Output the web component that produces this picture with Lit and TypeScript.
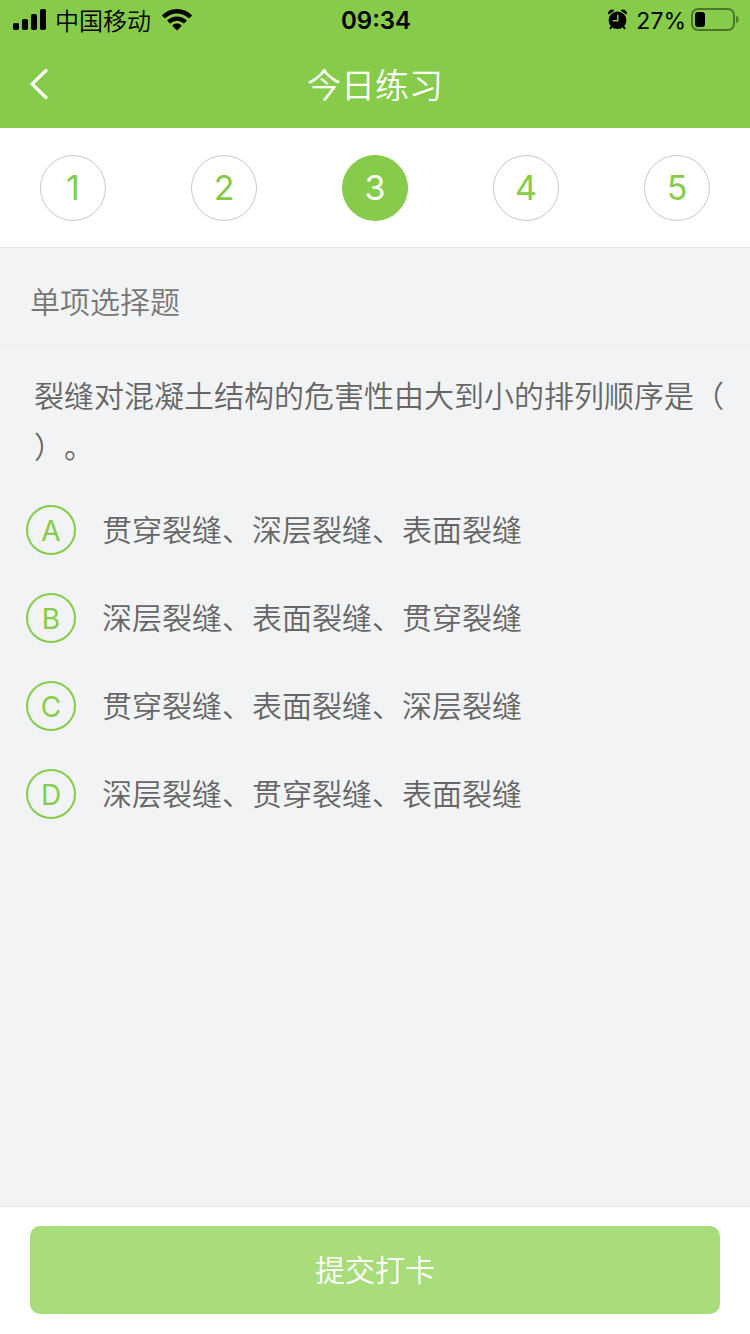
import { LitElement, html, css } from "lit";
import { customElement, state } from "lit/decorators.js";
import { classMap } from "lit/directives/class-map.js";

@customElement("status-bar")
class StatusBar extends LitElement {
  static styles = css`
    :host {
      display: grid;
      grid-template-columns: 1fr auto 1fr;
      align-items: center;
      height: 40px;
      padding: 0 11px 0 13px;
      color: #000;
      font-size: 24px;
      font-weight: 400;
      line-height: 36px;
    }
    .side {
      display: flex;
      align-items: center;
    }
    .left {
      gap: 9px;
    }
    .wifi {
      margin-left: 2px;
    }
    .right {
      justify-content: flex-end;
      gap: 5px;
    }
    .alarm {
      margin-right: 4px;
    }
    .time,
    .percent {
      padding-top: 2px;
    }
    .carrier {
      padding-top: 4px;
      font-weight: 350;
    }
    .time {
      font-weight: 600;
    }
    .percent {
      font-size: 23px;
    }
    svg {
      display: block;
      flex: none;
    }
  `;

  render() {
    return html`
      <div class="side left">
        <svg width="33" height="22" viewBox="0 0 33 22" aria-hidden="true">
          <rect x="0" y="14" width="6" height="7" rx="1.8" />
          <rect x="9" y="10" width="6" height="11" rx="1.8" />
          <rect x="18" y="5" width="6" height="16" rx="1.8" />
          <rect x="27" y="0" width="6" height="21" rx="1.8" />
        </svg>
        <span class="carrier">中国移动</span>
        <svg class="wifi" width="30" height="22" viewBox="0 0 30 22" aria-hidden="true">
          <path d="M15 0C20.700 0 25.900 2.200 29.700 5.900C30 6.200 30 6.600 29.700 6.900L27.500 9.100C27.200 9.400 26.800 9.400 26.500 9.100C23.400 6.200 19.400 4.500 15 4.500S6.600 6.200 3.500 9.100C3.200 9.400 2.800 9.400 2.500 9.100L.3 6.900C0 6.600 0 6.200 .3 5.900C4.100 2.200 9.300 0 15 0Z" />
          <path d="M15 7.400C18.700 7.400 22 8.800 24.500 11.100C24.800 11.400 24.800 11.800 24.500 12.100L22.300 14.300C22 14.600 21.600 14.600 21.300 14.300C19.600 12.800 17.400 11.800 15 11.800S10.400 12.800 8.700 14.300C8.400 14.600 8 14.600 7.700 14.300L5.500 12.100C5.200 11.800 5.200 11.400 5.500 11.100C8 8.800 11.300 7.400 15 7.400Z" />
          <path d="M15 14.600C16.700 14.600 18.200 15.200 19.400 16.200C19.700 16.500 19.700 16.900 19.400 17.200L15.500 21.100C15.200 21.400 14.800 21.400 14.500 21.100L10.600 17.200C10.300 16.900 10.300 16.500 10.600 16.200C11.800 15.200 13.300 14.600 15 14.600Z" />
        </svg>
      </div>
      <span class="time">09:34</span>
      <div class="side right">
        <svg class="alarm" width="19" height="22" viewBox="0 0 20 22" aria-hidden="true">
          <path d="M.5 5.400A4 4 0 0 1 6.800 .9ZM19.500 5.400A4 4 0 0 0 13.200 .9Z" />
          <path d="M4.200 17.500L2.500 19.800M15.800 17.500L17.500 19.800" stroke="#000" stroke-width="2" stroke-linecap="round" />
          <circle cx="10" cy="11.300" r="9.300" />
          <path d="M10.300 6V11.800H5.500" fill="none" stroke="#86cc4a" stroke-width="1.500" stroke-linecap="round" stroke-linejoin="round" />
        </svg>
        <span class="percent">27%</span>
        <svg width="48" height="24" viewBox="0 0 48 24" aria-hidden="true">
          <rect x="1" y="1" width="42" height="21" rx="6" fill="none" stroke="#000" stroke-opacity=".42" stroke-width="2" />
          <rect x="4" y="4" width="10" height="15" rx="3" />
          <path d="M45.200 7.700C46.800 8.300 47.600 9.700 47.600 11.500S46.800 14.700 45.200 15.300Z" fill-opacity=".42" />
        </svg>
      </div>
    `;
  }
}

@customElement("app-root")
class AppRoot extends LitElement {
  @state() private current = 3;
  @state() private answer = "";

  private readonly steps = [1, 2, 3, 4, 5];
  private readonly options = [
    { key: "A", text: "贯穿裂缝、深层裂缝、表面裂缝" },
    { key: "B", text: "深层裂缝、表面裂缝、贯穿裂缝" },
    { key: "C", text: "贯穿裂缝、表面裂缝、深层裂缝" },
    { key: "D", text: "深层裂缝、贯穿裂缝、表面裂缝" },
  ];

  static styles = css`
    :host {
      display: flex;
      flex-direction: column;
      min-height: 100vh;
      background: #f2f3f5;
      color: #666;
      font-family: Inter, "Noto Sans CJK SC", sans-serif;
      font-size: 30px;
      font-weight: 350;
      text-spacing-trim: space-all;
    }
    * {
      box-sizing: border-box;
    }
    button {
      margin: 0;
      padding: 0;
      border: 0;
      background: none;
      font: inherit;
      cursor: pointer;
    }
    .top {
      background: #86cc4a;
    }
    .bar {
      display: grid;
      grid-template-columns: 80px 1fr 80px;
      align-items: center;
      height: 88px;
      color: #fff;
    }
    .back {
      display: flex;
      align-items: center;
      height: 88px;
      padding-left: 30px;
      color: #fff;
    }
    .title {
      margin: 0;
      padding-top: 4px;
      font-size: 34px;
      font-weight: 350;
      line-height: 84px;
      text-align: center;
    }
    .steps {
      display: flex;
      justify-content: space-between;
      padding: 27px 40px 26px;
      border-bottom: 1px solid #e4e4e4;
      background: #fff;
    }
    .step {
      width: 66px;
      height: 66px;
      border: 1px solid #c8c8c8;
      border-radius: 50%;
      color: #86cc4a;
      font-size: 34px;
      font-weight: 400;
      line-height: 64px;
      text-align: center;
    }
    .step.active {
      border-color: #86cc4a;
      background: #86cc4a;
      color: #fff;
    }
    .kind {
      margin: 0;
      padding: 0 30px;
      border-bottom: 1px solid #e9eaec;
      color: #777;
      font-size: 30px;
      font-weight: 350;
      line-height: 108px;
      height: 98px;
    }
    .question {
      flex: 1;
      padding: 25px 20px 40px 26px;
      min-width: 0;
    }
    .stem {
      margin: 0;
      padding-left: 8px;
      line-height: 51px;
      line-break: anywhere;
    }
    .options {
      display: flex;
      flex-direction: column;
      gap: 38px;
      padding-top: 32px;
    }
    .option {
      display: flex;
      align-items: center;
      gap: 26px;
      line-height: 50px;
      cursor: pointer;
    }
    .mark {
      display: grid;
      flex: none;
      color: #86cc4a;
      font-weight: 400;
      text-align: center;
    }
    .mark > * {
      grid-area: 1 / 1;
    }
    .radio {
      appearance: none;
      width: 50px;
      height: 50px;
      margin: 0;
      border: 2px solid #86cc4a;
      border-radius: 50%;
      cursor: pointer;
    }
    .radio:checked {
      background: #86cc4a;
    }
    .radio:checked + .letter {
      color: #fff;
    }
    .letter {
      z-index: 1;
      font-size: 28px;
      line-height: 52px;
      height: 50px;
    }
    .footer {
      padding: 19px 30px 20px;
      border-top: 1px solid #e6e7e9;
      background: #fff;
    }
    .submit {
      width: 100%;
      height: 88px;
      border-radius: 10px;
      background: #a9dc7a;
      color: #fff;
      line-height: 88px;
    }
  `;

  render() {
    return html`
      <header class="top">
        <status-bar></status-bar>
        <div class="bar">
          <button class="back" aria-label="返回">
            <svg width="18" height="32" viewBox="0 0 18 32" aria-hidden="true">
              <path d="M16 2.500L2 16L16 29.500" fill="none" stroke="currentColor" stroke-width="3.200" stroke-linecap="round" stroke-linejoin="miter" />
            </svg>
          </button>
          <h1 class="title">今日练习</h1>
        </div>
      </header>
      <nav class="steps">
        ${this.steps.map(
          (n) => html`<button
            class=${classMap({ step: true, active: n === this.current })}
            @click=${() => (this.current = n)}
          >${n}</button>`
        )}
      </nav>
      <h2 class="kind">单项选择题</h2>
      <main class="question">
        <p class="stem" id="stem">裂缝对混凝土结构的危害性由大到小的排列顺序是（）。</p>
        <div class="options" role="radiogroup" aria-labelledby="stem">
          ${this.options.map(
            (o) => html`<label class="option">
              <span class="mark">
                <input
                  class="radio"
                  type="radio"
                  name="answer"
                  .value=${o.key}
                  .checked=${this.answer === o.key}
                  @change=${() => (this.answer = o.key)}
                />
                <span class="letter">${o.key}</span>
              </span>
              <span>${o.text}</span>
            </label>`
          )}
        </div>
      </main>
      <footer class="footer">
        <button class="submit">提交打卡</button>
      </footer>
    `;
  }
}
